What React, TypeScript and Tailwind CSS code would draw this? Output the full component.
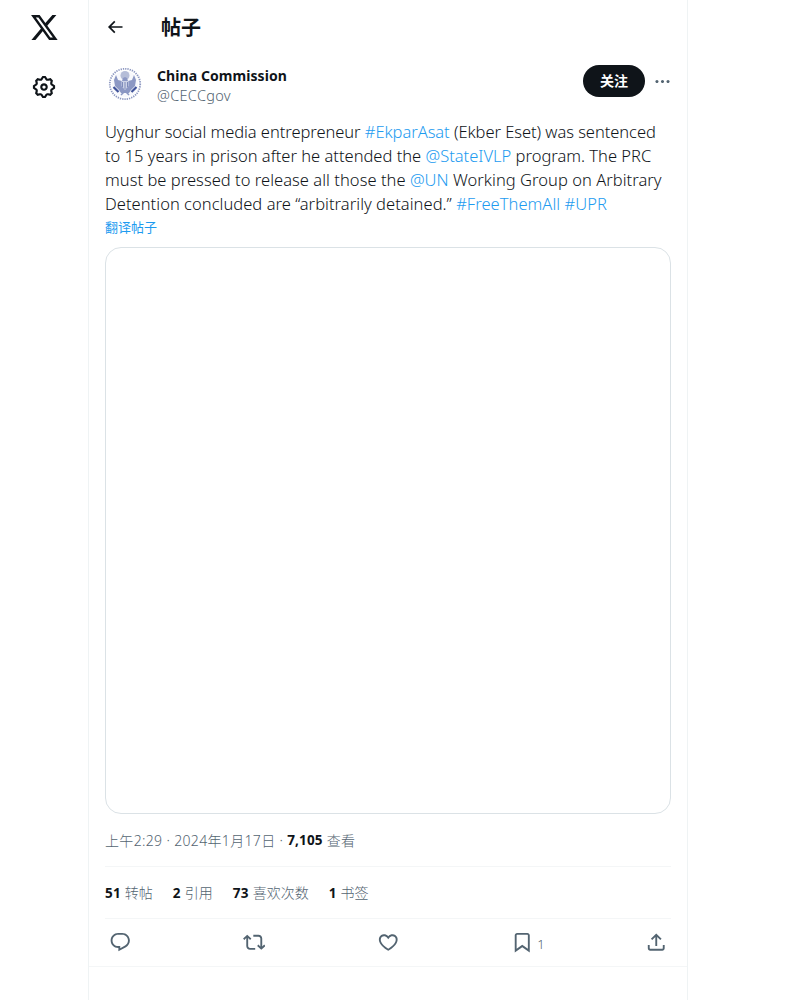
import React from 'react';

const ICONS = {
  gear: 'M10.54 1.75h2.92l1.57 2.36c.11.17.32.25.53.21l2.53-.59 2.17 2.17-.58 2.54c-.05.2.04.41.21.53l2.36 1.57v2.92l-2.36 1.57c-.17.12-.26.33-.21.53l.58 2.54-2.17 2.17-2.53-.59c-.21-.04-.42.04-.53.21l-1.57 2.36h-2.92l-1.58-2.36c-.11-.17-.32-.25-.52-.21l-2.54.59-2.17-2.17.58-2.54c.05-.2-.03-.41-.21-.53l-2.35-1.57v-2.92L4.1 8.97c.18-.12.26-.33.21-.53L3.73 5.9 5.9 3.73l2.54.59c.2.04.41-.04.52-.21l1.58-2.36zm1.07 2l-.98 1.47C10.05 6.08 9 6.5 7.99 6.27l-1.46-.34-.6.6.33 1.46c.24 1.01-.18 2.07-1.05 2.64l-1.46.98v.78l1.46.98c.87.57 1.29 1.63 1.05 2.64l-.33 1.46.6.6 1.46-.34c1.01-.23 2.06.19 2.64 1.05l.98 1.47h.78l.97-1.47c.58-.86 1.63-1.28 2.65-1.05l1.45.34.61-.6-.34-1.46c-.23-1.01.18-2.07 1.05-2.64l1.47-.98v-.78l-1.47-.98c-.87-.57-1.28-1.63-1.05-2.64l.34-1.46-.61-.6-1.45.34c-1.02.23-2.07-.19-2.65-1.05l-.97-1.47h-.78zM12 10.5c-.83 0-1.5.67-1.5 1.5s.67 1.5 1.5 1.5c.82 0 1.5-.67 1.5-1.5s-.68-1.5-1.5-1.5zM8.5 12c0-1.93 1.56-3.5 3.5-3.5 1.93 0 3.5 1.57 3.5 3.5s-1.57 3.5-3.5 3.5c-1.94 0-3.5-1.57-3.5-3.5z',
  reply: 'M1.751 10c0-4.42 3.584-8 8.005-8h4.366c4.49 0 8.129 3.64 8.129 8.13 0 2.96-1.607 5.68-4.196 7.11l-8.054 4.46v-3.69h-.067c-4.49.1-8.183-3.51-8.183-8.01zm8.005-6c-3.317 0-6.005 2.69-6.005 6 0 3.37 2.77 6.08 6.138 6.01l.351-.01h1.761v2.3l5.087-2.81c1.951-1.08 3.163-3.13 3.163-5.36 0-3.39-2.744-6.13-6.129-6.13H9.756z',
  repost: 'M4.5 3.88l4.432 4.14-1.364 1.46L5.5 7.55V16c0 1.1.896 2 2 2H13v2H7.5c-2.209 0-4-1.79-4-4V7.55L1.432 9.48.068 8.02 4.5 3.88zM16.5 6H11V4h5.5c2.209 0 4 1.79 4 4v8.45l2.068-1.93 1.364 1.46-4.432 4.14-4.432-4.14 1.364-1.46 2.068 1.93V8c0-1.1-.896-2-2-2z',
  like: 'M16.697 5.5c-1.222-.06-2.679.51-3.89 2.16l-.805 1.09-.806-1.09C9.984 6.01 8.526 5.44 7.304 5.5c-1.243.07-2.349.78-2.91 1.91-.552 1.12-.633 2.78.479 4.82 1.074 1.97 3.257 4.27 7.129 6.61 3.87-2.34 6.052-4.64 7.126-6.61 1.111-2.04 1.03-3.7.477-4.82-.561-1.13-1.666-1.84-2.908-1.91zm4.187 7.69c-1.351 2.48-4.001 5.12-8.379 7.67l-.503.3-.504-.3c-4.379-2.55-7.029-5.19-8.382-7.67-1.36-2.5-1.41-4.86-.514-6.67.887-1.79 2.647-2.91 4.601-3.01 1.651-.09 3.368.56 4.798 2.01 1.429-1.45 3.146-2.1 4.796-2.01 1.954.1 3.714 1.22 4.601 3.01.896 1.81.846 4.17-.514 6.67z',
  bookmark: 'M4 4.5C4 3.12 5.119 2 6.5 2h11C18.881 2 20 3.12 20 4.5v18.44l-8-5.71-8 5.71V4.5zM6.5 4c-.276 0-.5.22-.5.5v14.56l6-4.29 6 4.29V4.5c0-.28-.224-.5-.5-.5h-11z',
  share: 'M12 2.59l5.7 5.7-1.41 1.42L13 6.41V16h-2V6.41l-3.3 3.3-1.41-1.42L12 2.59zM21 15l-.02 3.51c0 1.38-1.12 2.49-2.5 2.49H5.5C4.11 21 3 19.88 3 18.5V15h2v3.5c0 .28.22.5.5.5h12.98c.28 0 .5-.22.5-.5L19 15h2z',
  back: 'M7.414 13l5.043 5.04-1.414 1.42L3.586 12l7.457-7.46 1.414 1.42L7.414 11H21v2H7.414z',
  more: 'M3 12c0-1.1.9-2 2-2s2 .9 2 2-.9 2-2 2-2-.9-2-2zm9 2c1.1 0 2-.9 2-2s-.9-2-2-2-2 .9-2 2 .9 2 2 2zm7 0c1.1 0 2-.9 2-2s-.9-2-2-2-2 .9-2 2 .9 2 2 2z',
};

function Icon({ name, className }: { name: keyof typeof ICONS; className: string }) {
  return (
    <svg viewBox="0 0 24 24" fill="currentColor" className={className} aria-hidden="true">
      <path d={ICONS[name]} />
    </svg>
  );
}

function Logo() {
  return (
    <svg viewBox="0 0 27 25" className="h-[25px] w-[27px]" aria-hidden="true">
      <path fill="none" stroke="currentColor" strokeWidth="2.4" d="M2.4 1.2h5.6l16.3 22.6h-5.6z" />
      <path fill="currentColor" d="M21.4 0h4L15.6 11.4l-1.9-2.6zM10.4 12.9l1.9 2.7L4.4 25H.4z" />
    </svg>
  );
}

function Seal() {
  return (
    <svg viewBox="0 0 40 40" className="size-10 shrink-0" aria-hidden="true">
      <circle cx="20" cy="20" r="15.2" fill="none" stroke="#8d98c1" strokeWidth="1.8" strokeDasharray="1.3 1" />
      <circle cx="20" cy="20" r="13" fill="#f7f8fc" />
      <circle cx="20" cy="11.5" r="4.5" fill="#b5bdd8" />
      <path fill="#8c98c4" d="M11 11l2 5 4 1 1-3 2-1 2 1 1 3 4-1 2-5 2 5-1 6-4 4-2 3h-8l-2-3-4-4-1-6z" />
      <path fill="#cdd3e7" d="M16.5 17h7v5L20 26l-3.5-4z" />
      <path stroke="#6978af" strokeWidth=".8" d="M17.5 18v5m2.5-5v7m2.5-7v5" />
      <path stroke="#40539a" strokeWidth="2.2" d="M8.5 23l5 5m18-5l-5 5" />
      <path stroke="#8a97c3" strokeWidth="1.5" d="M16 31l4-4 4 4" fill="none" />
    </svg>
  );
}

function Link({ children }: { children: React.ReactNode }) {
  return <span className="text-[#1d9bf0]">{children}</span>;
}

function Stat({ value, label }: { value: string; label: string }) {
  return (
    <div className="flex items-baseline gap-1">
      <span className="text-[13.5px] font-bold tracking-[0.2px] text-[#0f1419]">{value}</span>
      <span>{label}</span>
    </div>
  );
}

export default function App() {
  return (
    <div className="flex h-[1000px] w-[800px] overflow-hidden bg-white font-['Noto_Sans','Noto_Sans_CJK_SC',sans-serif] text-[#0f1419]">
      <aside className="flex w-[88px] shrink-0 flex-col items-center pt-[15px]">
        <Logo />
        <Icon name="gear" className="mt-[34px] size-[26px]" />
      </aside>
      <main className="w-[600px] shrink-0 border-x border-[#eff3f4]">
        <header className="flex h-[53px] items-center pl-4">
          <Icon name="back" className="size-5" />
          <h1 className="mt-0.5 ml-9 text-[20px] leading-6 font-bold">帖子</h1>
        </header>
        <article>
          <div className="px-4 pt-[11px]">
            <div className="flex h-10">
              <Seal />
              <div className="ml-3 flex-1 pt-px">
                <div className="text-[14px] leading-[22px] font-bold tracking-[0.08px]">China Commission</div>
                <div className="text-[14.5px] leading-[17px] font-light tracking-[0.3px] text-[#536471]">@CECCgov</div>
              </div>
              <button className="mt-px h-8 w-[62px] rounded-full bg-[#0f1419] text-[14px] leading-8 font-bold text-white">关注</button>
              <Icon name="more" className="mt-[8px] -mr-px ml-2 size-[19px] text-[#536471]" />
            </div>
            <div className="mt-4 text-[16.5px] leading-6 font-light whitespace-nowrap">
              <div className="tracking-[-0.05px]">Uyghur social media entrepreneur <Link>#EkparAsat</Link> (Ekber Eset) was sentenced</div>
              <div>to 15 years in prison after he attended the <Link>@StateIVLP</Link> program. The PRC</div>
              <div className="tracking-[0.04px]">must be pressed to release all those the <Link>@UN</Link> Working Group on Arbitrary</div>
              <div className="tracking-[0.04px]">Detention concluded are “arbitrarily detained.” <Link>#FreeThemAll</Link> <Link>#UPR</Link></div>
            </div>
            <div className="-mt-px text-[13px] leading-6 text-[#1d9bf0]">翻译帖子</div>
            <div className="mt-2 h-[567px] w-[566px] rounded-2xl border border-[#dbe2e6]" />
            <div className="flex h-[52px] items-center pt-px text-[14px] font-light whitespace-pre text-[#536471]">
              <span className="tracking-[0.34px]">上午2:29 · 2024年1月17日 · </span>
              <span className="text-[13.5px] font-bold tracking-[0.15px] text-[#0f1419]">7,105</span>
              <span className="tracking-[0.3px]"> 查看</span>
            </div>
            <div className="flex h-[52px] items-center gap-5 border-t border-[#f4f6f7] text-[14px] font-light text-[#536471]">
              <Stat value="51" label="转帖" />
              <Stat value="2" label="引用" />
              <Stat value="73" label="喜欢次数" />
              <Stat value="1" label="书签" />
            </div>
            <div className="flex h-12 items-center justify-between border-t border-[#f4f6f7] px-[3.75px] text-[#536471]">
              <Icon name="reply" className="size-[22.5px]" />
              <Icon name="repost" className="size-[22.5px]" />
              <Icon name="like" className="size-[22.5px]" />
              <div className="flex w-[22.5px] items-center gap-1 text-[13px] font-light">
                <Icon name="bookmark" className="size-[22.5px] shrink-0" />
                <span className="pt-1">1</span>
              </div>
              <Icon name="share" className="size-[22.5px]" />
            </div>
          </div>
          <div className="border-t border-[#f4f6f7]" />
        </article>
      </main>
    </div>
  );
}
